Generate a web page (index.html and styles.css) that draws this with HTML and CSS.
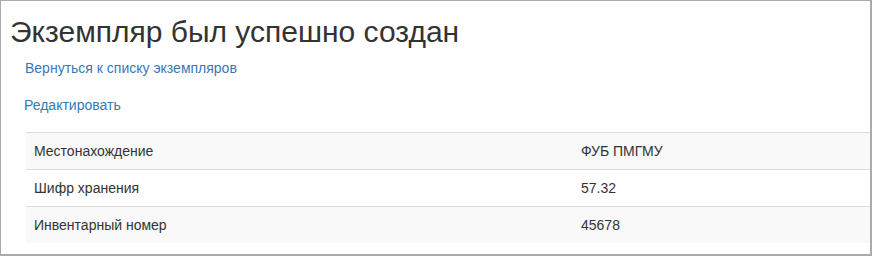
FILE: index.html
```
<!DOCTYPE html>
<html lang="ru">
<head>
<meta charset="utf-8">
<title>Экземпляр был успешно создан</title>
<link rel="stylesheet" href="styles.css">
</head>
<body>
<div class="frame">
  <h2 class="title">Экземпляр был успешно создан</h2>
  <p class="nav back"><a href="#">Вернуться к списку экземпляров</a></p>
  <p class="nav edit"><a href="#">Редактировать</a></p>
  <table class="details">
    <tbody>
      <tr class="odd"><td class="key">Местонахождение</td><td>ФУБ ПМГМУ</td></tr>
      <tr><td class="key">Шифр хранения</td><td>57.32</td></tr>
      <tr class="odd"><td class="key">Инвентарный номер</td><td>45678</td></tr>
    </tbody>
  </table>
</div>
</body>
</html>
```
FILE: styles.css
```
html, body {
  margin: 0;
  padding: 0;
  background: #fff;
}
body {
  font-family: "Liberation Sans", Arial, sans-serif;
  font-size: 14px;
  line-height: 20px;
  color: #333;
}
.frame {
  box-sizing: border-box;
  width: 872px;
  height: 256px;
  border: 1px solid #ababab;
  border-right-width: 2px;
  border-bottom-width: 2px;
  overflow: hidden;
  padding-left: 9px;
}
.title {
  margin: 14px 0 0;
  font-size: 30px;
  line-height: 33px;
  font-weight: normal;
  color: #333;
}
.nav {
  margin: 0;
}
.nav a {
  color: #337ab7;
  text-decoration: none;
}
.back {
  margin-top: 10px;
  padding-left: 15px;
}
.edit {
  margin-top: 17px;
  padding-left: 14px;
}
.details {
  margin-top: 17px;
  margin-left: 16px;
  width: 845px;
  border-collapse: collapse;
  border-spacing: 0;
}
.details td {
  padding: 8px;
  border-top: 1px solid #ddd;
  vertical-align: top;
}
.details td.key {
  width: 531px;
}
.details tr.odd td {
  background: #f9f9f9;
}
```
